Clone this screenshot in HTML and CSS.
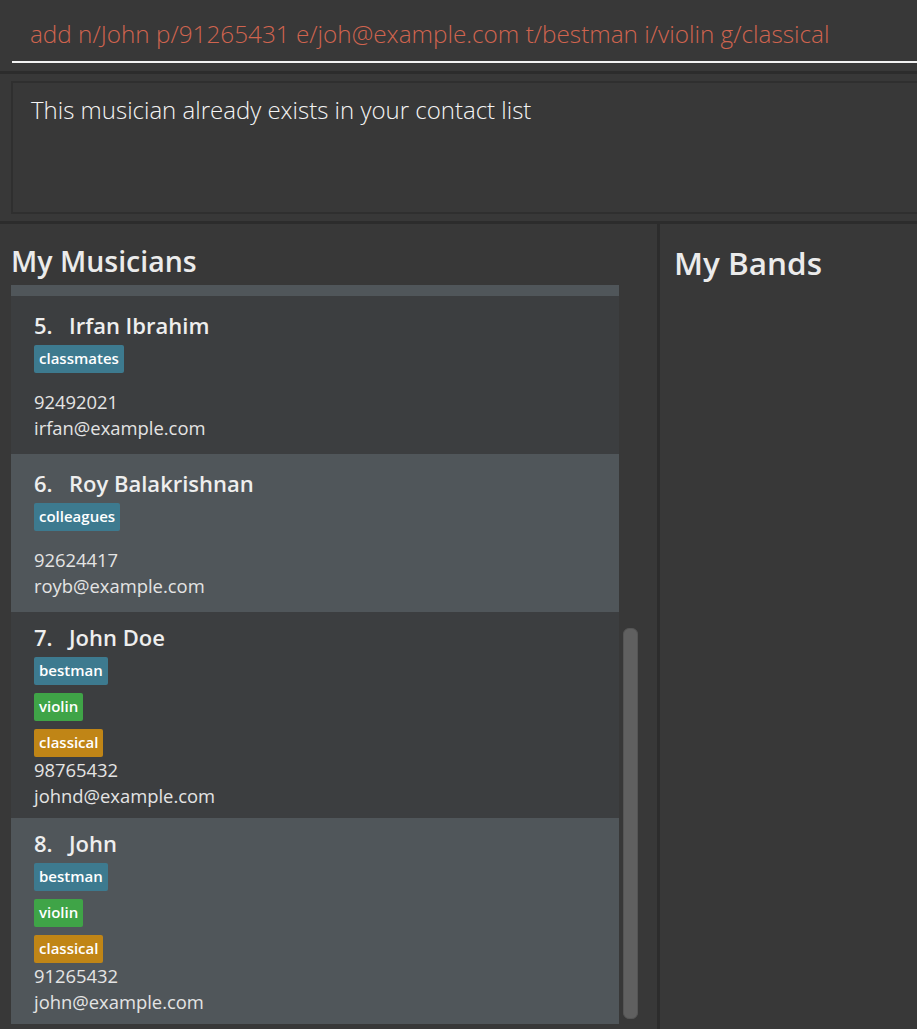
FILE: index.html
```html
<!DOCTYPE html>
<html>
<head>
<meta charset="utf-8">
<link rel="stylesheet" href="styles.css">
</head>
<body>
<div class="app">
  <div class="command">
    <div class="command-text">add n/John p/91265431 e/joh@example.com t/bestman i/violin g/classical</div>
    <div class="command-line"></div>
  </div>
  <div class="divider"></div>
  <div class="result">
    <div class="result-box">This musician already exists in your contact list</div>
  </div>
  <div class="divider"></div>
  <div class="panes">
    <div class="pane-left">
      <div class="title">My Musicians</div>
      <div class="list">
        <div class="cards">
          <div class="card-tail"></div>
          <div class="card card-dark card-sparse">
            <div class="name"><span class="idx">5.</span>Irfan Ibrahim</div>
            <div class="tag-row"><span class="tag tag-blue">classmates</span></div>
            <div class="info info-first">92492021</div>
            <div class="info">irfan@example.com</div>
          </div>
          <div class="card card-light card-sparse">
            <div class="name"><span class="idx">6.</span>Roy Balakrishnan</div>
            <div class="tag-row"><span class="tag tag-blue">colleagues</span></div>
            <div class="info info-first">92624417</div>
            <div class="info">royb@example.com</div>
          </div>
          <div class="card card-dark">
            <div class="name"><span class="idx">7.</span>John Doe</div>
            <div class="tag-row"><span class="tag tag-blue">bestman</span></div>
            <div class="tag-row"><span class="tag tag-green">violin</span></div>
            <div class="tag-row"><span class="tag tag-orange">classical</span></div>
            <div class="info info-first">98765432</div>
            <div class="info">johnd@example.com</div>
          </div>
          <div class="card card-light">
            <div class="name"><span class="idx">8.</span>John</div>
            <div class="tag-row"><span class="tag tag-blue">bestman</span></div>
            <div class="tag-row"><span class="tag tag-green">violin</span></div>
            <div class="tag-row"><span class="tag tag-orange">classical</span></div>
            <div class="info info-first">91265432</div>
            <div class="info">john@example.com</div>
          </div>
        </div>
        <div class="scroll-track"><div class="scroll-thumb"></div></div>
      </div>
    </div>
    <div class="vdivider"></div>
    <div class="pane-right">
      <div class="title title-right">My Bands</div>
    </div>
  </div>
</div>
</body>
</html>
```

FILE: styles.css
```css
* { box-sizing: border-box; }
html, body { margin: 0; padding: 0; }
body {
  background: #383838;
  width: 917px;
  height: 1029px;
  overflow: hidden;
  font-family: "Open Sans", "Noto Sans", sans-serif;
}
.app { display: flex; flex-direction: column; height: 1029px; }

.command { height: 71px; padding-top: 17px; }
.command-text {
  padding-left: 30px;
  font-size: 24.3px;
  font-weight: 300;
  color: #d0644f;
  line-height: 34px;
  white-space: nowrap;
}
.command-line {
  margin-left: 12px;
  margin-top: 10px;
  height: 2px;
  background: #f2f2f2;
}

.divider {
  height: 3px;
  background: #2c2c2c;
}

.result { padding: 7px 0 7px 11px; height: 147px; }
.result-box {
  height: 133px;
  border: 2px solid #2f2f2f;
  border-right: none;
  padding: 10px 0 0 18px;
  font-size: 24px;
  font-weight: 300;
  color: #f4f4f4;
  line-height: 34px;
  white-space: nowrap;
}

.panes { display: flex; flex: 1; }
.pane-left { width: 657px; padding: 0 0 0 11px; display: flex; flex-direction: column; }
.vdivider { width: 3px; background: #2c2c2c; }
.pane-right { flex: 1; padding-left: 14px; }

.title {
  font-size: 28.5px;
  font-weight: 600;
  color: #ebebeb;
  line-height: 38px;
  padding-top: 18px;
  height: 61px;
}
.title-right { padding-top: 20px; font-size: 31.5px; }

.list { display: flex; height: 739px; }
.cards { width: 608px; display: flex; flex-direction: column; }
.card-tail { height: 11px; background: #50565a; }
.card { padding: 10px 0 0 23px; }
.card-dark { background: #3c3e40; height: 206px; }
.card-light { background: #50565a; height: 206px; }
.card-sparse { height: 158px; padding-top: 14px; }

.name {
  font-size: 22px;
  font-weight: 600;
  color: #eeeeee;
  line-height: 30px;
  white-space: nowrap;
}
.idx { display: inline-block; width: 35px; }
.tag-row { display: flex; margin-top: 5px; height: 28px; }
.tag-row + .tag-row { margin-top: 8px; }
.tag {
  display: inline-block;
  height: 28px;
  line-height: 27px;
  padding: 0 5px;
  border-radius: 2px;
  font-size: 15px;
  font-weight: 600;
  color: #ffffff;
}
.tag-blue { background: #3d7a8f; }
.tag-green { background: #3fa447; }
.tag-orange { background: #c08516; }

.info {
  font-size: 18.4px;
  color: #e4e4e4;
  line-height: 26px;
  white-space: nowrap;
}
.info-first { margin-top: 0; }
.card-sparse .info-first { margin-top: 16px; }

.scroll-track { width: 15px; margin-left: 4px; padding-top: 343px; }
.scroll-thumb {
  height: 391px;
  background: #606060;
  border: 1px solid #555555;
  border-radius: 6px;
}
```
